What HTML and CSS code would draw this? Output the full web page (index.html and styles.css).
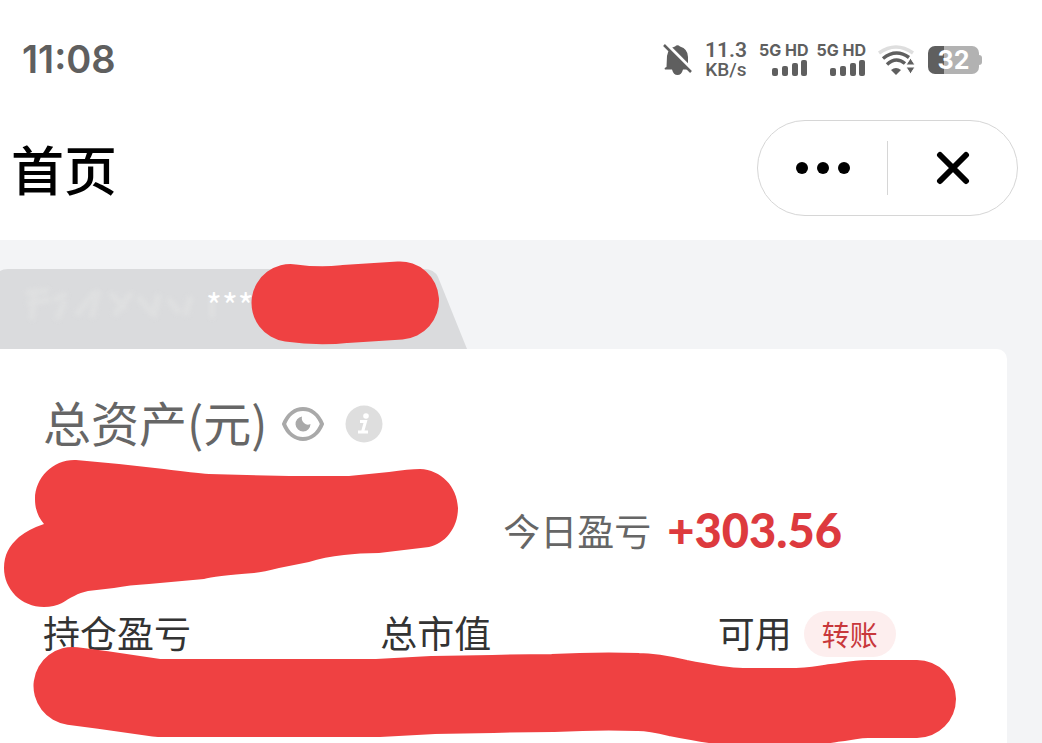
FILE: index.html
```html
<!DOCTYPE html>
<html lang="zh-CN">
<head>
    <meta charset="UTF-8">
    <meta name="viewport" content="width=device-width, initial-scale=1.0">
    <title>首页</title>
    <link rel="stylesheet" href="styles.css">
</head>
<body>
    <header>
        <div class="status-bar">
            <time class="clock">11:08</time>
            <div class="status-icons">
                <svg class="bell" width="30" height="34" viewBox="0 0 30 34">
                    <path fill="#5f5f5f" d="M2 26.500C1 25.500 2 24.500 3.500 24L4 13Q5 5 12 3.500Q14.500 1 17 3.500Q25 6 25 14V24Q27 25 26.500 26.500H20Q18.500 32 14.500 32T9 26.500Z"/>
                    <path stroke="#fff" stroke-width="4" d="M3 1L30 28"/>
                    <path stroke="#5f5f5f" stroke-width="2.500" d="M1 2L28 29"/>
                </svg>
                <div class="speed">
                    <span>11.3</span>
                    <span class="unit">KB/s</span>
                </div>
                <div class="signals">
                    <div class="signal">
                        <span>5G HD</span>
                        <svg width="36" height="18" viewBox="0 0 36 18">
                            <g fill="#5f5f5f">
                                <rect x="0" y="9" width="6" height="8" rx="2"/>
                                <rect x="10" y="7" width="6" height="10" rx="2"/>
                                <rect x="20" y="4" width="6" height="13" rx="2"/>
                                <rect x="29" y="1" width="6" height="16" rx="2"/>
                            </g>
                        </svg>
                    </div>
                    <div class="signal">
                        <span>5G HD</span>
                        <svg width="36" height="18" viewBox="0 0 36 18">
                            <g fill="#5f5f5f">
                                <rect x="0" y="9" width="6" height="8" rx="2"/>
                                <rect x="10" y="7" width="6" height="10" rx="2"/>
                                <rect x="20" y="4" width="6" height="13" rx="2"/>
                                <rect x="29" y="1" width="6" height="16" rx="2"/>
                            </g>
                        </svg>
                    </div>
                </div>
                <svg class="wifi" width="38" height="32" viewBox="0 0 38 32">
                    <g fill="none" stroke="#5f5f5f" stroke-width="3.500">
                        <path stroke="#dedede" d="M1 9Q18 -3 35 9"/>
                        <path d="M5 14.500Q18 4 31 13.500"/>
                        <path d="M9 20.500Q18 12 27 19.500"/>
                    </g>
                    <path fill="#5f5f5f" d="M13 26Q18 22 23 26L18 31Z"/>
                    <path fill="#5f5f5f" stroke="#fff" d="M32.500 14L37 21H28ZM32.500 30L37 23H28Z"/>
                </svg>
                <div class="battery"><span>32</span></div>
            </div>
        </div>
        <nav class="nav-bar">
            <h1>首页</h1>
            <div class="capsule">
                <button class="capsule-button" aria-label="更多">
                    <svg width="56" height="14" viewBox="0 0 56 14">
                        <circle cx="7" cy="7" r="6"/>
                        <circle cx="28" cy="7" r="6"/>
                        <circle cx="49" cy="7" r="6"/>
                    </svg>
                </button>
                <button class="capsule-button" aria-label="关闭">
                    <svg width="34" height="34" viewBox="0 0 34 34">
                        <path stroke="#000" stroke-width="6" stroke-linecap="round" d="M4 4L30 30M30 4L4 30"/>
                    </svg>
                </button>
            </div>
        </nav>
    </header>

    <main>
        <div class="account-tab">
            <svg class="tab-shape" width="467" height="80" viewBox="0 0 467 80">
                <path fill="#dadbdd" d="M0 2Q3 0 8 0H424Q434 0 438 8L467 80H0Z"/>
                <g class="smudge" fill="none" stroke="#e2e3e3" stroke-width="6" stroke-linecap="round">
                    <path d="M28 24L46 22M30 34L48 31M34 22L32 48M56 30L64 26M58 48L64 34"/>
                    <path d="M78 44L94 24M98 24L92 46M112 26L124 38M116 44L130 26M140 30L152 44M158 28L154 46"/>
                    <path d="M170 32L178 42M190 30L186 44M212 30V46"/>
                </g>
            </svg>
            <span class="account-name">***</span>
            <svg class="mark mark-account" width="190" height="84" viewBox="0 0 190 84">
                <path fill="none" stroke="#ef4142" stroke-width="78" stroke-linecap="round" stroke-linejoin="round" d="M39.500 42Q68 46 94 43L149 39.500"/>
            </svg>
        </div>

        <section class="card">
            <div class="total">
                <h2>总资产(元)</h2>
                <button class="icon-button" aria-label="隐藏金额">
                    <svg width="44" height="36" viewBox="0 0 44 36">
                        <path fill="none" stroke="#a9a9a9" stroke-width="4" d="M3 18C11 -2 33 -2 41 18C33 38 11 38 3 18Z"/>
                        <path fill="#a9a9a9" d="M21 10.500A7.500 7.500 0 1 0 29.500 18Q26 20 23 17Q20 14 21 10.500Z"/>
                    </svg>
                </button>
                <button class="icon-button" aria-label="说明">
                    <svg width="38" height="38" viewBox="0 0 38 38">
                        <circle cx="19" cy="19" r="18.500" fill="#dedede"/>
                        <circle cx="21" cy="11" r="2.800" fill="#fff"/>
                        <path fill="none" stroke="#fff" stroke-width="3" d="M15 16.500H20.500L17.500 27M13 27H23"/>
                    </svg>
                </button>
            </div>

            <div class="balance">
                <svg class="mark mark-balance" width="456" height="150" viewBox="0 0 456 150">
                    <path fill="#ef4142" d="M72 1C50 0 31 18 31 40C31 50 34 58 40 65Q25 70 15 78C5 87 0 96 0 109C0 130 17 148 40 148Q50 148 58 144C66 139 74 134 84 132L110 129Q125 126 145 125L200 120Q210 117 250 114Q260 113 275 109L305 103Q320 98 340 96Q355 94 375 94L425 88C440 85 454 70 454 49C453 27 437 11 416 10Q405 10 385 13L345 17H285L205 15Q190 14 160 10L115 5Z"/>
                </svg>
                <div class="today">
                    <span class="today-label">今日盈亏</span>
                    <strong class="today-value">+303.56</strong>
                </div>
            </div>

            <div class="stats">
                <span>持仓盈亏</span>
                <span>总市值</span>
                <div class="available">
                    <span>可用</span>
                    <button class="transfer">转账</button>
                </div>
                <svg class="mark mark-stats" width="926" height="102" viewBox="0 0 926 102">
                    <path fill="none" stroke="#ef4142" stroke-width="78" stroke-linecap="round" stroke-linejoin="round" d="M39.500 40L70 44L125 52H345L400 49L460 48Q490 47 520 47L548 46Q575 45 605 46Q620 46 645 52C675 58 695 61 710 61H765Q785 60 800 57C815 56 820 53 835 53H884"/>
                </svg>
            </div>
        </section>
    </main>
</body>
</html>
```
FILE: styles.css
```css
* {
    box-sizing: border-box;
}

body {
    font-family: 'Noto Sans CJK SC', sans-serif;
    margin: 0;
    min-height: 100vh;
    display: flex;
    flex-direction: column;
    background: #f3f4f6;
    color: #333333;
}

header {
    background: #ffffff;
    padding-bottom: 24px;
}

button {
    border: none;
    padding: 0;
    background: none;
    font-family: inherit;
    cursor: pointer;
}

svg {
    display: block;
    flex-shrink: 0;
}

.status-bar {
    display: flex;
    justify-content: space-between;
    align-items: center;
    height: 120px;
    padding: 0 63px 0 22px;
    font-family: Inter, sans-serif;
    font-weight: 600;
    color: #5f5f5f;
}

.clock {
    font-size: 38px;
    line-height: 44px;
    padding-bottom: 2px;
}

.status-icons {
    display: flex;
    align-items: center;
    gap: 12px;
}

.speed {
    display: flex;
    flex-direction: column;
    align-items: center;
    font-family: Roboto, sans-serif;
    font-size: 21px;
    line-height: 20px;
}

.unit {
    font-size: 19px;
    font-weight: 500;
}

.signals {
    display: flex;
    gap: 8px;
}

.signal {
    display: flex;
    flex-direction: column;
    align-items: flex-end;
    padding-bottom: 2px;
    font-size: 16px;
    font-weight: 700;
    line-height: 18px;
}

.battery {
    position: relative;
    width: 51px;
    height: 28px;
    border-radius: 7px;
    background: linear-gradient(90deg, #5f5f5f 32%, #b2b2b2 32%);
    color: #ffffff;
    font-size: 25px;
    font-weight: 700;
    line-height: 28px;
    text-align: center;
}

.battery::after {
    content: "";
    position: absolute;
    left: 100%;
    top: 9px;
    width: 3px;
    height: 10px;
    border-radius: 0 3px 3px 0;
    background: #b2b2b2;
}

.nav-bar {
    display: flex;
    justify-content: space-between;
    align-items: center;
    padding: 0 24px 0 11px;
}

h1 {
    margin: 0;
    font-size: 53px;
    font-weight: 500;
    line-height: 96px;
    color: #000000;
}

.capsule {
    display: flex;
    align-items: center;
    width: 261px;
    height: 96px;
    border: 1px solid #d6d6d6;
    border-radius: 48px;
}

.capsule-button {
    flex: 1;
    display: flex;
    justify-content: center;
    align-items: center;
    height: 54px;
}

.capsule-button + .capsule-button {
    border-left: 1px solid #d6d6d6;
}

main {
    flex: 1;
    display: flex;
    flex-direction: column;
    padding: 29px 35px 0 0;
}

.account-tab {
    position: relative;
    height: 80px;
}

.tab-shape {
    position: absolute;
    left: 0;
    top: 0;
}

.smudge {
    filter: blur(2px);
    opacity: 0.6;
}

.account-name {
    position: relative;
    display: block;
    padding-left: 206px;
    font-size: 34px;
    line-height: 72px;
    color: #ffffff;
}

.mark {
    position: absolute;
}

.mark-account {
    left: 251px;
    top: -8px;
}

.card {
    flex: 1;
    padding: 40px 0 0 43px;
    border-radius: 0 10px 0 0;
    background: #ffffff;
    overflow: hidden;
}

.total {
    display: flex;
    align-items: center;
    gap: 20px;
    height: 70px;
    color: #666666;
}

h2 {
    margin: 0 -6px 0 0;
    padding-bottom: 6px;
    font-size: 48px;
    font-weight: 400;
    line-height: 64px;
}

.balance {
    position: relative;
    height: 148px;
    display: flex;
    justify-content: flex-end;
    align-items: center;
    padding-right: 165px;
}

.mark-balance {
    left: -39px;
    top: 0;
}

.today {
    display: flex;
    align-items: center;
    gap: 16px;
    padding-bottom: 6px;
    line-height: 54px;
}

.today-label {
    font-size: 37px;
    color: #666666;
}

.today-value {
    font-family: Lato, sans-serif;
    font-size: 47px;
    font-weight: 900;
    color: #dd3a3e;
}

.stats {
    position: relative;
    display: grid;
    grid-template-columns: repeat(3, 1fr);
    column-gap: 48px;
    align-items: start;
    height: 136px;
    font-size: 37px;
    line-height: 50px;
}

.available {
    display: flex;
    align-items: flex-end;
    gap: 12px;
}

.transfer {
    height: 46px;
    padding: 0 18px;
    border-radius: 23px;
    background: #fdeeee;
    color: #c8373b;
    font-size: 28px;
    line-height: 42px;
}

.mark-stats {
    left: -10px;
    top: 39px;
}
```
